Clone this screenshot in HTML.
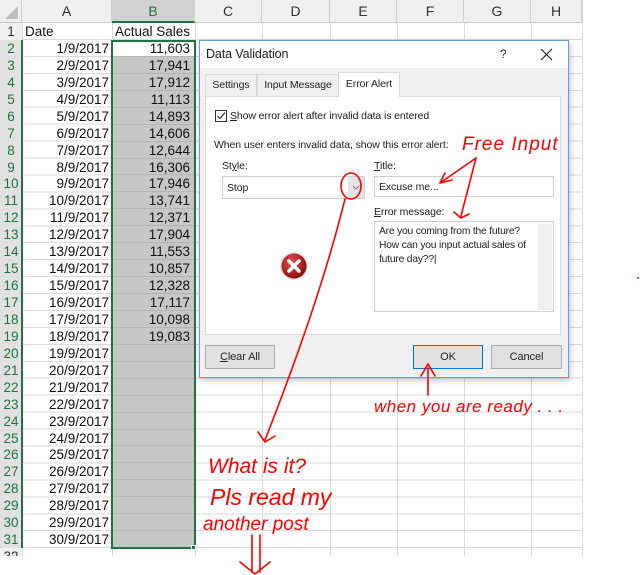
<!DOCTYPE html>
<html><head><meta charset="utf-8"><style>
*{margin:0;padding:0;box-sizing:border-box}
body{width:640px;height:575px;background:#fff;position:relative;overflow:hidden;font-family:"Liberation Sans",sans-serif}
#grid{position:absolute;left:0;top:0;width:582px;height:556px;
background:
repeating-linear-gradient(to bottom,transparent 0,transparent 15.94px,#dadada 15.94px,#dadada 16.94px);
background-position:0 23px;background-repeat:repeat-y}
.v{position:absolute;top:0;width:1px;height:556px;background:#dadada}
#hdr{position:absolute;left:0;top:0;width:582px;height:23px;background:#f0f0f0;border-bottom:1px solid #c8c8c8;font-size:14px;color:#333}
#hdr div{position:absolute;top:0;height:23px;line-height:23px;text-align:center;border-right:1px solid #d0d0d0}
#rows{position:absolute;left:0;top:23px}
.r{height:16.94px;display:flex;font-size:13.5px;line-height:17px;color:#111}
.n{width:22px;text-align:center;color:#217346;background:#e1e1e1;font-size:13.5px}
.a{width:90px;text-align:right;padding-right:3px}
.b{width:83px;text-align:right;padding-right:5px;background:#c6c6c6;border-bottom:1px solid #b5b5b5}
#dlg{position:absolute;left:199px;top:40px;width:370px;height:338px;background:#f0f0f0;border:1px solid #6aa0d6;box-shadow:1px 2px 6px rgba(0,0,0,.25);font-size:10.5px;color:#222;letter-spacing:-0.1px}
.ab{position:absolute}
.btn{position:absolute;height:24px;background:#e1e1e1;border:1px solid #adadad;text-align:center;line-height:22px;font-size:11px}
.red{fill:none;stroke:#f00;stroke-width:1.6;stroke-linecap:round;stroke-linejoin:round}
.hw{font-family:"Liberation Sans",sans-serif;fill:#f00;font-style:italic}
</style></head><body>
<div id="grid"></div>
<div class="v" style="left:22px"></div><div class="v" style="left:112px"></div><div class="v" style="left:195px"></div><div class="v" style="left:262px"></div><div class="v" style="left:330px"></div><div class="v" style="left:397px"></div><div class="v" style="left:464px"></div><div class="v" style="left:531px"></div><div class="v" style="left:582px"></div>
<div id="hdr">
<div style="left:0;width:22px"><svg width="22" height="23"><path d="M18 6 L18 19 L5 19 Z" fill="#bdbdbd"/></svg></div>
<div style="left:22px;width:90px">A</div>
<div style="left:112px;width:83px;background:#d2d2d2;color:#217346;border-bottom:2px solid #217346">B</div>
<div style="left:195px;width:67px">C</div><div style="left:262px;width:68px">D</div><div style="left:330px;width:67px">E</div><div style="left:397px;width:67px">F</div><div style="left:464px;width:67px">G</div><div style="left:531px;width:51px">H</div>
</div>
<div id="rows">
<div class="r"><div class="n" style="background:#f0f0f0;color:#333">1</div><div class="a" style="text-align:left;padding-left:3px">Date</div><div class="b" style="background:none;border:none;text-align:left;padding-left:3px;width:90px">Actual Sales</div></div>
<div class="r"><div class="n">2</div><div class="a">1/9/2017</div><div class="b" style="background:#fff">11,603</div></div>
<div class="r"><div class="n">3</div><div class="a">2/9/2017</div><div class="b">17,941</div></div>
<div class="r"><div class="n">4</div><div class="a">3/9/2017</div><div class="b">17,912</div></div>
<div class="r"><div class="n">5</div><div class="a">4/9/2017</div><div class="b">11,113</div></div>
<div class="r"><div class="n">6</div><div class="a">5/9/2017</div><div class="b">14,893</div></div>
<div class="r"><div class="n">7</div><div class="a">6/9/2017</div><div class="b">14,606</div></div>
<div class="r"><div class="n">8</div><div class="a">7/9/2017</div><div class="b">12,644</div></div>
<div class="r"><div class="n">9</div><div class="a">8/9/2017</div><div class="b">16,306</div></div>
<div class="r"><div class="n">10</div><div class="a">9/9/2017</div><div class="b">17,946</div></div>
<div class="r"><div class="n">11</div><div class="a">10/9/2017</div><div class="b">13,741</div></div>
<div class="r"><div class="n">12</div><div class="a">11/9/2017</div><div class="b">12,371</div></div>
<div class="r"><div class="n">13</div><div class="a">12/9/2017</div><div class="b">17,904</div></div>
<div class="r"><div class="n">14</div><div class="a">13/9/2017</div><div class="b">11,553</div></div>
<div class="r"><div class="n">15</div><div class="a">14/9/2017</div><div class="b">10,857</div></div>
<div class="r"><div class="n">16</div><div class="a">15/9/2017</div><div class="b">12,328</div></div>
<div class="r"><div class="n">17</div><div class="a">16/9/2017</div><div class="b">17,117</div></div>
<div class="r"><div class="n">18</div><div class="a">17/9/2017</div><div class="b">10,098</div></div>
<div class="r"><div class="n">19</div><div class="a">18/9/2017</div><div class="b">19,083</div></div>
<div class="r"><div class="n">20</div><div class="a">19/9/2017</div><div class="b"></div></div>
<div class="r"><div class="n">21</div><div class="a">20/9/2017</div><div class="b"></div></div>
<div class="r"><div class="n">22</div><div class="a">21/9/2017</div><div class="b"></div></div>
<div class="r"><div class="n">23</div><div class="a">22/9/2017</div><div class="b"></div></div>
<div class="r"><div class="n">24</div><div class="a">23/9/2017</div><div class="b"></div></div>
<div class="r"><div class="n">25</div><div class="a">24/9/2017</div><div class="b"></div></div>
<div class="r"><div class="n">26</div><div class="a">25/9/2017</div><div class="b"></div></div>
<div class="r"><div class="n">27</div><div class="a">26/9/2017</div><div class="b"></div></div>
<div class="r"><div class="n">28</div><div class="a">27/9/2017</div><div class="b"></div></div>
<div class="r"><div class="n">29</div><div class="a">28/9/2017</div><div class="b"></div></div>
<div class="r"><div class="n">30</div><div class="a">29/9/2017</div><div class="b"></div></div>
<div class="r"><div class="n">31</div><div class="a">30/9/2017</div><div class="b"></div></div>
<div class="r"><div class="n" style="background:#f0f0f0;color:#333;height:8px;overflow:hidden">32</div></div>
</div>
<div class="ab" style="left:21px;top:40px;width:2px;height:508px;background:#217346"></div>
<div class="ab" style="left:111px;top:40px;width:85px;height:509px;border:2px solid #217346"></div>
<div class="ab" style="left:191px;top:545px;width:5px;height:5px;background:#217346;border:1px solid #fff"></div>

<div id="dlg">
<div class="ab" style="left:0;top:0;width:368px;height:27px;background:#fff"></div>
<div class="ab" style="left:6px;top:6px;font-size:12.5px">Data Validation</div>
<div class="ab" style="left:300px;top:6px;font-size:12px">?</div>
<svg class="ab" style="left:340px;top:7px" width="14" height="14"><path d="M1 1 L12 12 M12 1 L1 12" stroke="#222" stroke-width="1.1"/></svg>
<div class="ab" style="left:5px;top:33px;width:52px;height:22px;border:1px solid #d9d9d9;border-bottom:none;line-height:21px;text-align:center">Settings</div>
<div class="ab" style="left:57px;top:33px;width:82px;height:22px;border:1px solid #d9d9d9;border-bottom:none;line-height:21px;text-align:center">Input Message</div>
<div class="ab" style="left:138px;top:31px;width:62px;height:25px;background:#fff;border:1px solid #d9d9d9;border-bottom:none;line-height:23px;text-align:center;z-index:2">Error Alert</div>
<div class="ab" style="left:5px;top:55px;width:356px;height:239px;background:#fff;border:1px solid #d9d9d9"></div>
<div class="ab" style="left:15px;top:69px;width:12px;height:12px;border:1px solid #333;background:#fff"><svg width="10" height="10" style="position:absolute;left:0;top:0"><path d="M1.5 5 L4 7.5 L9 1.5" fill="none" stroke="#333" stroke-width="1.2"/></svg></div>
<div class="ab" style="left:30px;top:69px"><u>S</u>how error alert after invalid data is entered</div>
<div class="ab" style="left:14px;top:98px">When user enters invalid data, show this error alert:</div>
<div class="ab" style="left:22px;top:119px">St<u>y</u>le:</div>
<div class="ab" style="left:22px;top:135px;width:143px;height:23px;border:1px solid #d0d0d0;background:#fff;padding:5px 0 0 4px">Stop</div>
<div class="ab" style="left:148px;top:136px;width:16px;height:21px;background:#e5e5e5"><svg width="16" height="21"><path d="M5 9 L8 12 L11 9" fill="none" stroke="#777" stroke-width="1"/></svg></div>
<div class="ab" style="left:174px;top:119px"><u>T</u>itle:</div>
<div class="ab" style="left:174px;top:135px;width:180px;height:21px;border:1px solid #d0d0d0;background:#fff;padding:4px 0 0 4px">Excuse me...</div>
<div class="ab" style="left:174px;top:165px"><u>E</u>rror message:</div>
<div class="ab" style="left:174px;top:180px;width:180px;height:91px;border:1px solid #d0d0d0;background:#fff;padding:3px 0 0 4px;line-height:14px;font-size:10.3px;letter-spacing:-0.2px">Are you coming from the future?<br>How can you input actual sales of<br>future day??|</div>
<div class="ab" style="left:338px;top:183px;width:14px;height:86px;background:#f0f0f0"></div>
<svg class="ab" style="left:79px;top:210px" width="32" height="32"><defs><radialGradient id="g" cx="40%" cy="35%" r="65%"><stop offset="0" stop-color="#e85050"/><stop offset="1" stop-color="#8c0d0d"/></radialGradient></defs><circle cx="15" cy="15" r="14" fill="#ddd"/><circle cx="15" cy="15" r="12.5" fill="url(#g)"/><path d="M10 10 L20 20 M20 10 L10 20" stroke="#fff" stroke-width="3.5" stroke-linecap="round"/></svg>
<div class="btn" style="left:5px;top:304px;width:70px"><u>C</u>lear All</div>
<div class="btn" style="left:213px;top:304px;width:70px;border-color:#0078d7">OK</div>
<div class="btn" style="left:291px;top:304px;width:71px">Cancel</div>
</div>

<svg class="ab" style="left:0;top:0" width="640" height="575">
<ellipse class="red" cx="351" cy="186" rx="10" ry="13"/>
<path class="red" d="M345 199 Q320 300 265 440 M258 432 L265 442 L275 436"/>
<path class="red" d="M476 158 L440 183 M440 183 L452 180 M440 183 L445 173"/>
<path class="red" d="M476 158 L461 216 M454 212 L461 218 L469 214"/>
<path class="red" d="M428 395 L428 368 M421 376 L428 364 L435 376"/>
<path class="red" d="M252 535 L252 572 M260 535 L260 572 M240 562 L255 574 L270 562"/>
<circle cx="638" cy="278" r="1" fill="#f00"/>
<text class="hw" x="462" y="150" font-size="19" letter-spacing="1">Free Input</text>
<text class="hw" x="374" y="412" font-size="17" letter-spacing="0.5">when you are ready . . .</text>
<text class="hw" x="208" y="473" font-size="21">What is it?</text>
<text class="hw" x="210" y="505" font-size="23">Pls read my</text>
<text class="hw" x="203" y="530" font-size="19">another post</text>
</svg>
</body></html>
